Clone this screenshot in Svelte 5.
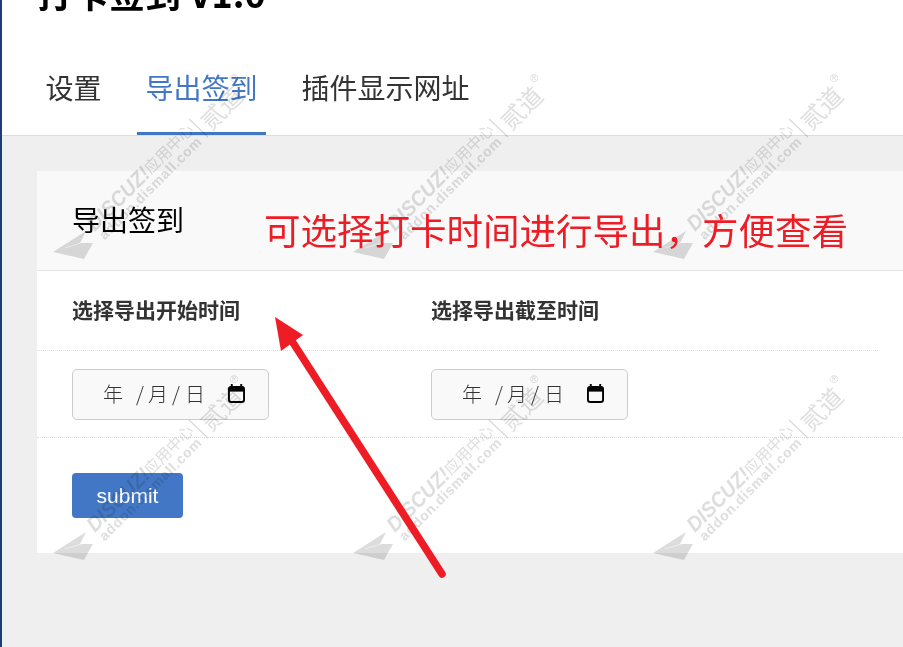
<script>
  const tabs = ['设置', '导出签到', '插件显示网址'];
  const fields = ['选择导出开始时间', '选择导出截至时间'];
  // watermark tile origins, the plane's nose sits at the origin
  const tiles = [];
  for (const y of [252, 553]) {
    for (const x of [53, 353, 653]) tiles.push({ x, y });
  }
</script>

<div class="page">
  <header class="top">
    <h1>打卡签到 V1.0</h1>
    <nav class="tabs">
      {#each tabs as tab, i}
        <span class="tab" class:active={i === 1}>{tab}</span>
      {/each}
    </nav>
  </header>

  <main class="body">
    <section class="card">
      <div class="card-head">导出签到</div>
      <div class="grid labels">
        {#each fields as field}
          <strong>{field}</strong>
        {/each}
      </div>
      <div class="grid inputs">
        {#each fields as field}
          <div class="date" aria-label={field}>
            <span class="y">年</span>
            <span class="s1">/</span>
            <span class="m">月</span>
            <span class="s2">/</span>
            <span class="d">日</span>
            <svg class="cal" viewBox="0 0 18 20" width="17" height="19">
              <path d="M4 0v3M14 0v3" stroke="#000" stroke-width="2" />
              <rect x="1" y="3" width="16" height="16" rx="2.5" fill="none" stroke="#000" stroke-width="2" />
              <rect x="1" y="3" width="16" height="5" fill="#000" />
            </svg>
          </div>
        {/each}
      </div>
      <div class="actions">
        <button class="submit">submit</button>
      </div>
    </section>
  </main>

  <svg class="wm" width="903" height="647" viewBox="0 0 903 647">
    {#each tiles as t}
      <g transform="translate({t.x} {t.y})">
        <path d="M0 0L33 -21L27 -9L40 -9L31 7Z" fill="#dcdcdc" />
        <path d="M12 -4L28 -9" stroke="#efefef" stroke-width="1" />
        <g transform="translate(37 -25) rotate(-45)" fill="#dedede">
          <text class="wm-brand" x="0" y="7" textLength="80" lengthAdjust="spacingAndGlyphs">DISCUZ!</text>
          <text class="wm-cn" x="80" y="6">应用中心</text>
          <text class="wm-cn2" x="153" y="18">贰道</text>
          <text class="wm-url" x="1" y="20" textLength="138">addon.dismall.com</text>
        </g>
        <path d="M136 -133L155 -115" stroke="#dadada" stroke-width="1.2" />
        <text class="wm-reg" x="177" y="-170" fill="#dadada">®</text>
      </g>
    {/each}
  </svg>

  <div class="note">可选择打卡时间进行导出，方便查看</div>
  <svg class="arrow" width="903" height="647" viewBox="0 0 903 647">
    <path d="M442 574L290 338" stroke="#ee1c25" stroke-width="7.5" stroke-linecap="round" />
    <path d="M275 317L303 335L281 351Z" fill="#ee1c25" />
  </svg>
</div>

<style>
  :global(body) {
    margin: 0;
    background: #fff;
  }

  .page {
    position: relative;
    width: 903px;
    height: 647px;
    overflow: hidden;
    display: flex;
    flex-direction: column;
    box-sizing: border-box;
    border-left: 2px solid #1f3d75;
    font-family: "Noto Sans CJK SC", "Liberation Sans", sans-serif;
    color: #333;
  }

  /* lighter top of the window edge */
  .page::before {
    content: "";
    position: absolute;
    left: -2px;
    top: 0;
    width: 2px;
    height: 38px;
    background: #3f6db5;
  }

  .top {
    height: 136px;
    flex-shrink: 0;
    box-sizing: border-box;
    padding-left: 35px;
    border-bottom: 1px solid #ddd;
    background: #fff;
  }

  h1 {
    margin: -35px 0 0;
    height: 90px;
    font-size: 36px;
    line-height: 54px;
    font-weight: 700;
    color: #000;
  }

  .tabs {
    display: flex;
    gap: 27px;
  }

  .tab {
    height: 77px;
    padding: 0 8.5px;
    font-size: 28px;
    line-height: 64px;
  }

  .tab.active {
    color: #4277c6;
    border-bottom: 3px solid #4277c6;
  }

  .body {
    flex: 1;
    background: #efefef;
    padding: 35px 0 0 35px;
  }

  .card {
    background: #fff;
    height: 382px;
  }

  .card-head {
    height: 100px;
    box-sizing: border-box;
    padding: 27px 0 0 35px;
    background: #f9f9f9;
    border-bottom: 1px solid #e5e5e5;
    font-size: 28px;
    line-height: 42px;
    color: #000;
  }

  .grid {
    display: grid;
    grid-template-columns: 359px 1fr;
    padding-left: 35px;
  }

  .labels {
    height: 80px;
    box-sizing: border-box;
    padding-bottom: 3px;
    align-items: center;
    border-bottom: 1px dotted #cfe5f7;
    margin-right: 25px;
    font-size: 21px;
  }

  .inputs {
    height: 87px;
    box-sizing: border-box;
    padding-top: 18px;
    border-bottom: 1px dotted #cfe5f7;
  }

  .date {
    position: relative;
    width: 197px;
    height: 51px;
    box-sizing: border-box;
    background: #f9f9f9;
    border: 1px solid #ccc;
    border-radius: 5px;
    font-size: 20px;
    font-weight: 300;
    line-height: 47px;
    color: #333;
  }

  .date span {
    position: absolute;
    top: 0;
  }

  .y { left: 30px; }
  .s1 { left: 63px; }
  .m { left: 75px; }
  .s2 { left: 99px; }
  .d { left: 112px; }

  .cal {
    position: absolute;
    left: 155px;
    top: 14px;
  }

  .actions {
    padding: 35px 0 0 35px;
  }

  .submit {
    display: block;
    width: 111px;
    height: 45px;
    border: none;
    border-radius: 4px;
    background: #4277c6;
    color: #fff;
    font-family: "Liberation Sans", sans-serif;
    font-size: 21px;
  }

  .wm, .arrow {
    position: absolute;
    left: -2px;
    top: 0;
    pointer-events: none;
  }

  .wm {
    mix-blend-mode: multiply;
  }

  .wm text {
    font-family: "Liberation Sans", "Noto Sans CJK SC", sans-serif;
  }

  .wm .wm-brand {
    font-size: 21px;
    font-style: italic;
    font-weight: 700;
    font-family: "Liberation Sans", sans-serif;
  }

  .wm .wm-cn {
    font-size: 15.5px;
  }

  .wm .wm-cn2 {
    font-size: 24px;
  }

  .wm .wm-url {
    font-size: 14px;
    font-weight: 700;
  }

  .wm .wm-reg {
    font-size: 11px;
  }

  .note {
    position: absolute;
    left: 262px;
    top: 204px;
    font-size: 36.5px;
    line-height: 52px;
    color: #ee1c25;
    white-space: nowrap;
  }
</style>
